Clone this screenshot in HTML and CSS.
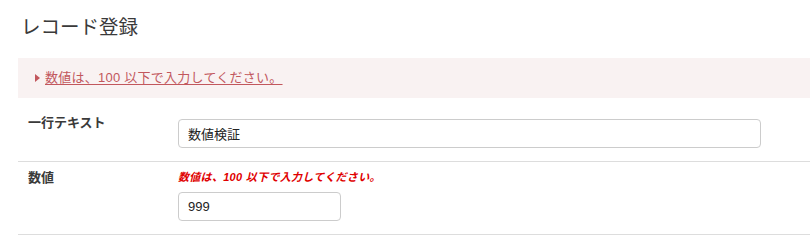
FILE: index.html
```html
<!DOCTYPE html>
<html lang="ja">
<head>
<meta charset="utf-8">
<title>レコード登録</title>
<link rel="stylesheet" href="styles.css">
</head>
<body>
<div class="page">
  <h1 class="title">レコード登録</h1>
  <div class="alert">
    <span class="arrow"></span>
    <a class="alert-link" href="#">数値は、100 以下で入力してください。</a>
  </div>
  <div class="row">
    <div class="label">一行テキスト</div>
    <div class="field">
      <input class="input input-wide" type="text" value="数値検証">
    </div>
  </div>
  <div class="row">
    <div class="label">数値</div>
    <div class="field">
      <div class="error">数値は、100 以下で入力してください。</div>
      <input class="input input-narrow" type="text" value="999">
    </div>
  </div>
</div>
</body>
</html>
```

FILE: styles.css
```css
html, body {
  margin: 0;
  padding: 0;
  background: #ffffff;
}
body {
  font-family: "Liberation Sans", "Noto Sans CJK JP", sans-serif;
  color: #333333;
}
.page {
  padding-left: 18px;
}
.title {
  margin: 0;
  padding: 13px 0 0 3px;
  font-size: 19.5px;
  line-height: 28px;
  font-weight: normal;
  color: #3a3a3a;
}
.alert {
  margin-top: 17px;
  margin-bottom: 9px;
  height: 40px;
  background: #f9f2f2;
  display: flex;
  align-items: center;
  padding-left: 17px;
}
.arrow {
  width: 0;
  height: 0;
  border-top: 4px solid transparent;
  border-bottom: 4px solid transparent;
  border-left: 5px solid #c2575d;
  margin-right: 5px;
}
.alert-link {
  font-size: 13px;
  line-height: 18px;
  letter-spacing: 0.25px;
  color: #c2575d;
  text-decoration: underline;
  text-underline-offset: 2px;
}
.row {
  display: grid;
  grid-template-columns: 160px 1fr;
  padding: 6px 0 13px;
  border-bottom: 1px solid #dddddd;
}
.label {
  padding-left: 10px;
  font-size: 13px;
  line-height: 20px;
  font-weight: bold;
  color: #3a3a3a;
}
.field {
  display: flex;
  flex-direction: column;
  align-items: flex-start;
}
.error {
  font-size: 11px;
  line-height: 18px;
  letter-spacing: 0.3px;
  font-weight: bold;
  font-style: italic;
  color: #e00000;
}
.input {
  box-sizing: border-box;
  height: 29px;
  margin: 6px 0 0;
  padding: 0 9px;
  border: 1px solid #cccccc;
  border-radius: 4px;
  font-family: "Liberation Sans", "Noto Sans CJK JP", sans-serif;
  font-size: 13px;
  color: #222222;
  background: #ffffff;
  outline: none;
}
.input-wide {
  width: 583px;
}
.input-narrow {
  width: 163px;
}
```
